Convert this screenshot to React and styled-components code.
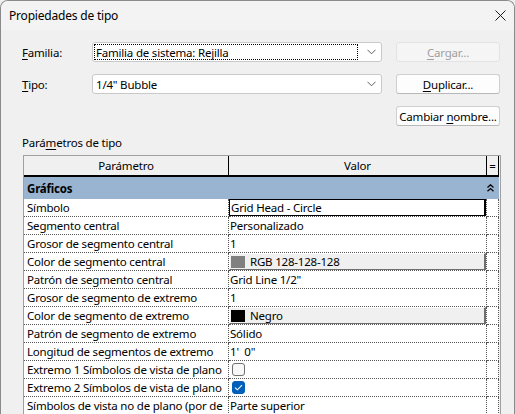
import * as React from 'react';
import styled, { createGlobalStyle } from "styled-components";

const GlobalStyle = createGlobalStyle`
    html, body {
        margin: 0;
        padding: 0;
        background: #f0f0f0;
    }
    body {
        font-family: "Noto Sans", "Open Sans", Arial, sans-serif;
        font-size: 11.5px;
        letter-spacing: -0.2px;
        color: #000;
    }
`;

const Window = styled.div`
    width: 515px;
    height: 414px;
    box-sizing: border-box;
    border: 1px solid #8a8a8a;
    border-bottom: none;
    border-radius: 8px 8px 0 0;
    background: #f0f0f0;
    overflow: hidden;
    display: flex;
    flex-direction: column;
`;

const TitleBar = styled.div`
    height: 29px;
    flex: none;
    display: flex;
    align-items: center;
    justify-content: space-between;
    padding: 0 0 0 8px;
    background: #f3f3f3;
`;

const Title = styled.div`
    font-size: 12px;
`;

const CloseButton = styled.div`
    width: 28px;
    height: 29px;
    display: flex;
    align-items: center;
    justify-content: center;
`;

const Body = styled.div`
    flex: 1;
    padding: 12px 0 0 21px;
    display: flex;
    flex-direction: column;
`;

const FormGrid = styled.div`
    display: grid;
    grid-template-columns: 70px 290px 118px;
    grid-template-rows: 20px 20px 20px;
    row-gap: 12px;
    align-items: center;
`;

const Label = styled.div``;

const Mn = styled.span`
    text-decoration: underline;
    text-underline-offset: 2px;
`;

const Combo = styled.div`
    height: 20px;
    box-sizing: border-box;
    border: 1px solid #c9c9c9;
    border-radius: 3px;
    background: #fff;
    display: flex;
    align-items: center;
    padding: 0 0 0 1px;
`;

const ComboText = styled.div`
    flex: 1;
    height: 16px;
    line-height: 15px;
    box-sizing: border-box;
    padding-left: 1px;
    border: 1px ${p => (p.$focused ? "dotted #000" : "solid transparent")};
    margin-right: 6px;
`;

const Chevron = styled.div`
    width: 14px;
    display: flex;
    justify-content: center;
    margin-right: 3px;
`;

const Button = styled.div`
    margin-left: 14px;
    height: 20px;
    box-sizing: border-box;
    border: 1px solid ${p => (p.$disabled ? "#e3e3e3" : "#cfcfcf")};
    border-bottom-color: ${p => (p.$disabled ? "#e3e3e3" : "#b8b8b8")};
    border-radius: 3px;
    background: ${p => (p.$disabled ? "#f5f5f5" : "#fdfdfd")};
    color: ${p => (p.$disabled ? "#a0a0a0" : "#000")};
    display: flex;
    align-items: center;
    justify-content: center;
`;

const SectionLabel = styled.div`
    margin-top: 9px;
    height: 16px;
    line-height: 16px;
`;

const TableFrame = styled.div`
    margin-top: 4px;
    margin-left: 1px;
    width: 478px;
    box-sizing: border-box;
    border: 1px solid #a0a0a0;
    border-bottom: none;
    flex: 1;
    overflow: hidden;
    background: #f0f0f0;
`;

const Grid = styled.div`
    display: grid;
    grid-template-columns: 205px 258px 12px;
    width: 475px;
`;

const HeadCell = styled.div`
    height: 21px;
    box-sizing: border-box;
    background: #f0f0f0;
    border-right: 1px solid #000;
    border-bottom: 2px solid #000;
    display: flex;
    align-items: center;
    justify-content: center;
    line-height: 1;
`;

const GroupRow = styled.div`
    grid-column: 1 / 4;
    height: 22px;
    box-sizing: border-box;
    background: #99b4d1;
    display: flex;
    align-items: center;
    justify-content: space-between;
    padding: 0 5px 0 3px;
    font-weight: bold;
`;

const Cell = styled.div`
    height: 18px;
    box-sizing: border-box;
    background: #fff;
    border-right: 1px dotted #555;
    border-bottom: 1px dotted #555;
    display: flex;
    align-items: center;
    padding-left: ${p => (p.$value ? "1px" : "3px")};
    white-space: nowrap;
    overflow: hidden;
`;

const EditBox = styled.div`
    flex: 1;
    align-self: stretch;
    margin-left: -1px;
    box-sizing: border-box;
    border: 1px solid #000;
    border-right-width: 2px;
    display: flex;
    align-items: center;
    padding-left: 1px;
`;

const ColorButton = styled.div`
    flex: 1;
    align-self: stretch;
    margin-left: -1px;
    box-sizing: border-box;
    background: #f0f0f0;
    border: 1px solid #fff;
    border-right: 2px solid #6e6e6e;
    border-bottom: 1px solid #6e6e6e;
    display: flex;
    align-items: center;
    gap: 5px;
    padding-left: 1px;
`;

const Swatch = styled.div`
    width: 14px;
    height: 12px;
    background: ${p => p.$color};
`;

const Check = styled.div`
    width: 13px;
    height: 13px;
    box-sizing: border-box;
    margin-left: 2px;
    border-radius: 3px;
    border: 1px solid ${p => (p.$checked ? "#005fb8" : "#707070")};
    background: ${p => (p.$checked ? "#005fb8" : "#f8f8f8")};
    display: flex;
    align-items: center;
    justify-content: center;
`;

const ChevronIcon = () => (
    <svg width="9" height="6" viewBox="0 0 9 6">
        <path d="M0.5 0.8 L4.5 4.8 L8.5 0.8" fill="none" stroke="#606060" strokeWidth="1" />
    </svg>
);

// the last name is cut by the column edge in the dialog
const rows = [
    { name: "Símbolo", value: "Grid Head - Circle", kind: "edit" },
    { name: "Segmento central", value: "Personalizado" },
    { name: "Grosor de segmento central", value: "1" },
    { name: "Color de segmento central", value: "RGB 128-128-128", kind: "color", color: "#808080" },
    { name: "Patrón de segmento central", value: "Grid Line 1/2\"" },
    { name: "Grosor de segmento de extremo", value: "1" },
    { name: "Color de segmento de extremo", value: "Negro", kind: "color", color: "#000" },
    { name: "Patrón de segmento de extremo", value: "Sólido" },
    { name: "Longitud de segmentos de extremo", value: "1'\u00a0\u00a00\"" },
    { name: "Extremo 1 Símbolos de vista de plano", kind: "check", checked: false },
    { name: "Extremo 2 Símbolos de vista de plano", kind: "check", checked: true },
    { name: "Símbolos de vista no de plano (por de", value: "Parte superior" },
];

const renderValue = (row) => {
    if (row.kind === "edit") return <EditBox>{row.value}</EditBox>;
    if (row.kind === "color") {
        return (
            <ColorButton>
                <Swatch $color={row.color} />
                <span>{row.value}</span>
            </ColorButton>
        );
    }
    if (row.kind === "check") {
        return (
            <Check $checked={row.checked}>
                {row.checked && (
                    <svg width="9" height="7" viewBox="0 0 9 7">
                        <path d="M1 3.6 L3.4 5.8 L8 1.2" fill="none" stroke="#fff" strokeWidth="1.1" />
                    </svg>
                )}
            </Check>
        );
    }
    return row.value;
};

const App = () => {
    return (
        <>
            <GlobalStyle />
            <Window>
                <TitleBar>
                    <Title>Propiedades de tipo</Title>
                    <CloseButton>
                        <svg width="11" height="11" viewBox="0 0 11 11">
                            <path d="M0.5 0.5 L10.5 10.5 M10.5 0.5 L0.5 10.5" stroke="#1a1a1a" strokeWidth="1" />
                        </svg>
                    </CloseButton>
                </TitleBar>
                <Body>
                    <FormGrid>
                        <Label><Mn>F</Mn>amilia:</Label>
                        <Combo>
                            <ComboText $focused>Familia de sistema: Rejilla</ComboText>
                            <Chevron><ChevronIcon /></Chevron>
                        </Combo>
                        <Button $disabled><span><Mn>C</Mn>argar...</span></Button>

                        <Label><Mn>T</Mn>ipo:</Label>
                        <Combo>
                            <ComboText>1/4" Bubble</ComboText>
                            <Chevron><ChevronIcon /></Chevron>
                        </Combo>
                        <Button><span><Mn>D</Mn>uplicar...</span></Button>

                        <div />
                        <div />
                        <Button><span>Cambiar <Mn>n</Mn>ombre...</span></Button>
                    </FormGrid>
                    <SectionLabel>Pará<Mn>m</Mn>etros de tipo</SectionLabel>
                    <TableFrame>
                        <Grid>
                            <HeadCell>Parámetro</HeadCell>
                            <HeadCell>Valor</HeadCell>
                            <HeadCell>=</HeadCell>
                            <GroupRow>
                                <span>Gráficos</span>
                                <svg width="7" height="8" viewBox="0 0 7 8">
                                    <path d="M0.5 3.5 L3.5 0.8 L6.5 3.5 M0.5 7.2 L3.5 4.5 L6.5 7.2" fill="none" stroke="#000" strokeWidth="1.3" />
                                </svg>
                            </GroupRow>
                            {rows.map((row) => (
                                <React.Fragment key={row.name}>
                                    <Cell>{row.name}</Cell>
                                    <Cell $value>{renderValue(row)}</Cell>
                                    <Cell />
                                </React.Fragment>
                            ))}
                        </Grid>
                    </TableFrame>
                </Body>
            </Window>
        </>
    );
};

export default App;
